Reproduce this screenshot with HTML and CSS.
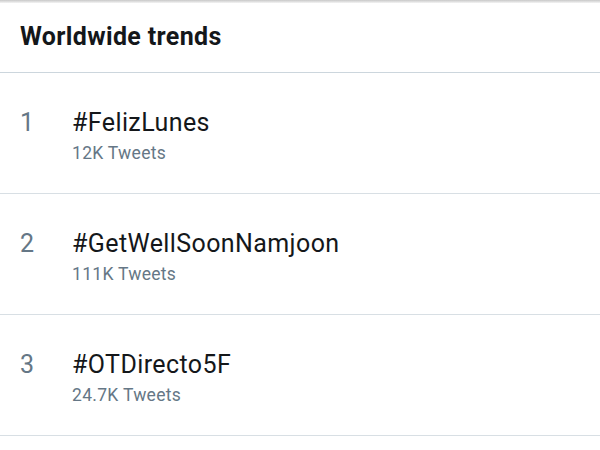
FILE: index.html
```html
<!DOCTYPE html>
<html lang="en">
<head>
  <meta charset="UTF-8">
  <meta name="viewport" content="width=device-width, initial-scale=1.0">
  <title>Worldwide trends</title>
  <link rel="stylesheet" href="styles.css">
</head>
<body>
  <div class="top-shadow"></div>
  <h1 class="trends-title">Worldwide trends</h1>

  <ul class="trend-list">
    <li class="trend">
      <span class="trend-rank">1</span>
      <div class="trend-info">
        <div class="trend-name">#FelizLunes</div>
        <div class="trend-count">12K Tweets</div>
      </div>
    </li>
    <li class="trend">
      <span class="trend-rank">2</span>
      <div class="trend-info">
        <div class="trend-name">#GetWellSoonNamjoon</div>
        <div class="trend-count">111K Tweets</div>
      </div>
    </li>
    <li class="trend">
      <span class="trend-rank">3</span>
      <div class="trend-info">
        <div class="trend-name">#OTDirecto5F</div>
        <div class="trend-count">24.7K Tweets</div>
      </div>
    </li>
  </ul>
</body>
</html>
```

FILE: styles.css
```css
body {
  margin: 0;
  background: #fff;
  font-family: Roboto, "Liberation Sans", sans-serif;
  color: #14171a;
}
.top-shadow {
  height: 3px;
  background: linear-gradient(#c8c8c8, #f4f4f4);
}
.trends-title {
  margin: 0;
  padding: 19px 20px 20px;
  font-size: 25px;
  line-height: 30px;
  font-weight: 700;
  letter-spacing: 0.35px;
  border-bottom: 1px solid #ccd6dd;
}
.trend-list {
  list-style: none;
  margin: 0;
  padding: 0;
}
.trend {
  display: flex;
  padding: 35px 20px 29px;
  border-bottom: 1px solid #d8dfe4;
}
.trend-rank {
  width: 52px;
  font-size: 25px;
  line-height: 30px;
  color: #657786;
}
.trend-name {
  font-size: 25px;
  line-height: 30px;
  letter-spacing: 0.4px;
}
.trend-count {
  margin-top: 4px;
  font-size: 17.5px;
  line-height: 22px;
  letter-spacing: 0.3px;
  color: #657786;
}
```
